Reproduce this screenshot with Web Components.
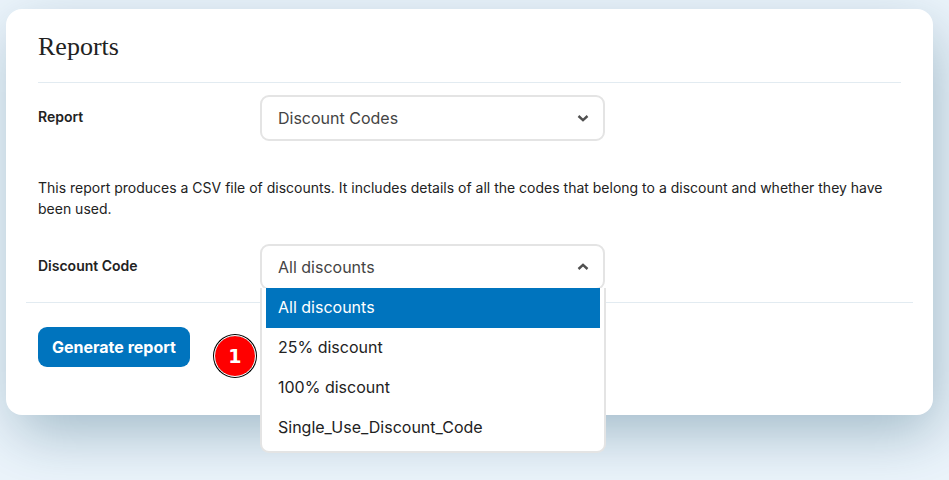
<!DOCTYPE html>
<html lang="en">
<head>
<meta charset="utf-8">
<title>Reports</title>
<style>
body { margin: 0; min-height: 100vh; box-sizing: border-box; padding: 9px 16px 24px 6px; background: #ebf4fb; color: #222; font-family: Inter, "Liberation Sans", sans-serif; overflow: hidden; }
</style>
</head>
<body>
<report-card heading="Reports">
  <form-row label="Report">
    <drop-down name="Report" options="Discount Codes"></drop-down>
  </form-row>
  <report-note>This report produces a CSV file of discounts. It includes details of all the codes that belong to a discount and whether they have been used.</report-note>
  <form-row label="Discount Code">
    <drop-down name="Discount Code" open options="All discounts|25% discount|100% discount|Single_Use_Discount_Code"></drop-down>
  </form-row>
  <form-actions slot="actions">
    <primary-button>Generate report</primary-button>
    <step-marker>1</step-marker>
  </form-actions>
</report-card>
<script>
class ReportCard extends HTMLElement {
  constructor() {
    super();
    this.attachShadow({ mode: "open" }).innerHTML = `
      <style>
        :host { display: block; background: #fff; border-radius: 16px; padding: 20px 32px 38px; box-shadow: 6px 20px 60px -4px rgba(0, 60, 90, .33); }
        h1 { margin: 0; padding-bottom: 17px; border-bottom: 1px solid #e2ebf1; font: 400 26px/36px "Liberation Serif", serif; }
        .actions { margin: 12px -12px 0 -12px; padding: 24px 12px 0; border-top: 1px solid #e2ebf1; }
      </style>
      <h1></h1>
      <slot></slot>
      <div class="actions"><slot name="actions"></slot></div>`;
  }
  connectedCallback() { this.shadowRoot.querySelector("h1").textContent = this.getAttribute("heading"); }
}
class FormRow extends HTMLElement {
  constructor() {
    super();
    this.attachShadow({ mode: "open" }).innerHTML = `
      <style>
        :host { display: grid; grid-template-columns: 222px minmax(0, 345px); align-items: center; padding-top: 12px; }
        label { font-size: 14px; line-height: 20px; font-weight: 600; padding-bottom: 2px; }
      </style>
      <label></label><slot></slot>`;
  }
  connectedCallback() {
    const label = this.shadowRoot.querySelector("label");
    label.textContent = this.getAttribute("label");
    label.addEventListener("click", () => this.querySelector("drop-down").shadowRoot.querySelector("select").focus());
  }
}
class ReportNote extends HTMLElement {
  constructor() {
    super();
    this.attachShadow({ mode: "open" }).innerHTML = `
      <style>
        :host { display: block; padding: 36px 0 13px; }
        p { margin: 0; font-size: 14px; line-height: 21px; }
      </style>
      <p><slot></slot></p>`;
  }
}
class DropDown extends HTMLElement {
  constructor() {
    super();
    this.attachShadow({ mode: "open" }).innerHTML = `
      <style>
        :host { display: block; position: relative; font-size: 16px; }
        .box { display: grid; grid-template-columns: minmax(0, 1fr); align-items: center; }
        select, svg { grid-area: 1 / 1; }
        select { appearance: none; box-sizing: border-box; width: 100%; height: 46px; margin: 0; padding: 0 40px 0 16px; border: 2px solid #e4e4e4; border-radius: 9px; background: #fff; color: #444; font: inherit; }
        svg { justify-self: end; margin-right: 16px; width: 12px; height: 12px; pointer-events: none; fill: none; stroke: #505050; stroke-width: 2.4; }
        :host([open]) svg { transform: rotate(180deg); }
        ul { position: absolute; z-index: 2; top: 44px; left: 0; right: -1px; margin: 0; padding: 0 4px 3px; list-style: none; background: #fff; border: 2px solid #e4e4e4; border-top: 0; border-radius: 0 0 9px 9px; }
        li { padding: 0 12px 2px; line-height: 38px; }
        li[aria-selected=true] { background: #0074be; color: #fff; }
      </style>
      <div class="box"><select></select><svg viewBox="0 0 12 12" aria-hidden="true"><path d="M1.5 4 6 8.2 10.500 4"/></svg></div>`;
  }
  connectedCallback() {
    const names = this.getAttribute("options").split("|");
    const select = this.shadowRoot.querySelector("select");
    select.setAttribute("aria-label", this.getAttribute("name"));
    names.forEach(n => select.add(new Option(n)));
    if (this.hasAttribute("open")) {
      const list = document.createElement("ul");
      list.setAttribute("role", "listbox");
      list.setAttribute("aria-label", this.getAttribute("name"));
      names.forEach((n, i) => {
        const item = document.createElement("li");
        item.setAttribute("role", "option");
        item.setAttribute("aria-selected", i === 0);
        item.textContent = n;
        item.addEventListener("click", () => { select.selectedIndex = i; list.remove(); this.removeAttribute("open"); });
        list.append(item);
      });
      this.shadowRoot.append(list);
    }
  }
}
class FormActions extends HTMLElement {
  constructor() {
    super();
    this.attachShadow({ mode: "open" }).innerHTML = `
      <style>:host { display: flex; align-items: flex-start; gap: 24px; }</style><slot></slot>`;
  }
}
class PrimaryButton extends HTMLElement {
  constructor() {
    super();
    this.attachShadow({ mode: "open" }).innerHTML = `
      <style>
        :host { display: block; }
        button { display: block; height: 40px; padding: 0 14px; border: 0; border-radius: 9px; background: #0074be; color: #fff; font: 700 16px/24px Inter, sans-serif; }
      </style>
      <button type="button"><slot></slot></button>`;
  }
}
class StepMarker extends HTMLElement {
  constructor() {
    super();
    this.attachShadow({ mode: "open" }).innerHTML = `
      <style>
        :host { display: block; margin-top: 8px; box-sizing: border-box; width: 42px; height: 42px; border: 1px solid #fff; border-radius: 50%; background: red; background-clip: padding-box; box-shadow: 0 0 0 1px #000; color: #fff; text-align: center; font: 700 19px/40px "DejaVu Sans", sans-serif; }
      </style>
      <slot></slot>`;
  }
}
customElements.define("report-card", ReportCard);
customElements.define("form-row", FormRow);
customElements.define("report-note", ReportNote);
customElements.define("drop-down", DropDown);
customElements.define("form-actions", FormActions);
customElements.define("primary-button", PrimaryButton);
customElements.define("step-marker", StepMarker);
</script>
</body>
</html>
